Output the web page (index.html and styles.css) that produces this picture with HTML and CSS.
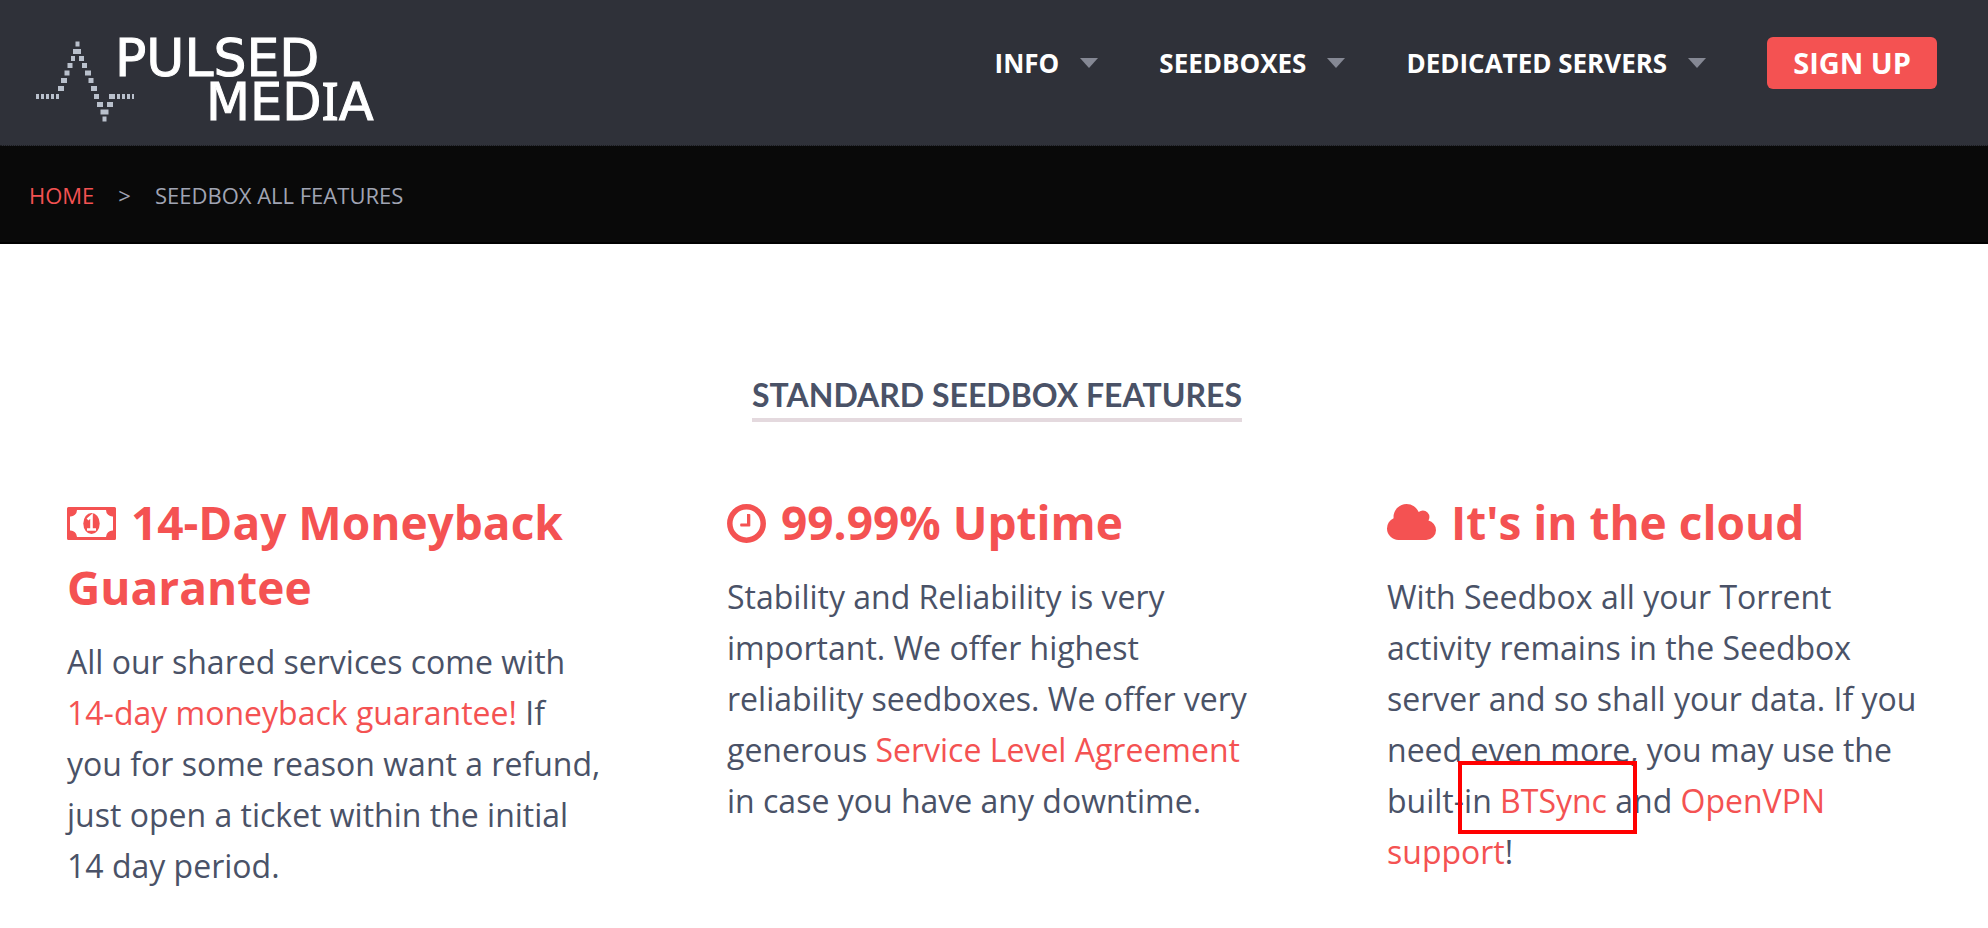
FILE: index.html
```html
<!DOCTYPE html>
<html lang="en">
<head>
<meta charset="utf-8">
<title>Seedbox All Features</title>
<link rel="stylesheet" href="styles.css">
</head>
<body>

<header class="site-header">
  <a class="logo" href="#">
    <svg width="350" height="116" viewBox="34 22 350 116" role="img" aria-label="Pulsed Media">
      <!-- heartbeat line -->
      <g fill="none" stroke="#b9c0cc" stroke-width="5">
        <path d="M36 96.5h25M112 96.5h22" stroke-dasharray="3 2"/>
        <path d="M75.500 44h4M73 51.500h8M71 58.500h4M79 58.500h5M67.500 65.500h5M82 65.500h5M64.500 73h5M85 73h6M61 80.500h6M88.500 80.500h5M58 88.500h6M91 88.500h6M94 96.500h5M109 96.500h4M97 104.500h6M107 104.500h6M100.500 112h8M102.500 119h4"/>
      </g>
      <text class="logo-text" x="115" y="76">PULSED</text>
      <text class="logo-text logo-second" x="206" y="120">MED<tspan class="logo-i">I</tspan>A</text>
    </svg>
  </a>
  <nav class="main-nav">
    <button class="nav-item" type="button">INFO <span class="arrow"></span></button>
    <button class="nav-item" type="button">SEEDBOXES <span class="arrow"></span></button>
    <button class="nav-item" type="button">DEDICATED SERVERS <span class="arrow"></span></button>
    <a class="signup" href="#">SIGN UP</a>
  </nav>
</header>

<div class="breadcrumb">
  <a href="#">HOME</a>
  <span>&gt;</span>
  <span>SEEDBOX ALL FEATURES</span>
</div>

<main class="features">
  <h2 class="section-title">STANDARD SEEDBOX FEATURES</h2>
  <div class="feature-grid">
    <div class="feature">
      <h3>
        <svg class="icon" width="49" height="33" viewBox="0 0 49 33">
          <path fill-rule="evenodd" d="M1.500 0h46a1.500 1.500 0 0 1 1.500 1.500v30a1.500 1.500 0 0 1-1.500 1.500h-46a1.500 1.500 0 0 1-1.500-1.500v-30a1.500 1.500 0 0 1 1.500-1.500zM10 3a6.500 6.500 0 0 1-7 6.500v14a6.500 6.500 0 0 1 7 6.500h29a6.500 6.500 0 0 1 7-6.500v-14a6.500 6.500 0 0 1-7-6.500z"/>
          <ellipse cx="24.500" cy="16.500" rx="8.200" ry="10.500"/>
          <path d="M20.500 12.500l4-3.500v13M20 22.500h9" fill="none" stroke="#fff" stroke-width="2.600"/>
        </svg>
        14-Day Moneyback Guarantee
      </h3>
      <p>All our shared services come with <a href="#">14-day moneyback guarantee!</a> If you for some reason want a refund, just open a ticket within the initial 14 day period.</p>
    </div>
    <div class="feature">
      <h3>
        <svg class="icon icon-clock" width="39" height="39" viewBox="0 0 39 39">
          <circle cx="19.500" cy="19.500" r="16.700" fill="none" stroke="#f45252" stroke-width="5.500"/>
          <path d="M20 10h2.500q.8 0 .8.800v11q0 .8-.8.800h-8.500q-.8 0-.8-.8v-1.600q0-.8.800-.8h6z"/>
        </svg>
        99.99% Uptime
      </h3>
      <p>Stability and Reliability is very important. We offer highest reliability seedboxes. We offer very generous <a href="#">Service Level Agreement</a> in case you have any downtime.</p>
    </div>
    <div class="feature">
      <h3>
        <svg class="icon" width="49" height="36" viewBox="64 128 1920 1408">
          <path d="M1984 1152q0 159-112.500 271.500T1600 1536H512q-185 0-316.500-131.500T64 1088q0-132 71-241.500T322 682q-2-28-2-43 0-212 150-362t362-150q158 0 286.500 88T1305 445q70-62 166-62 106 0 181 75t75 181q0 75-41 138 129 30 213.500 134.500T1984 1152z"/>
        </svg>
        It's in the cloud
      </h3>
      <p>With Seedbox all your Torrent activity remains in the Seedbox server and so shall your data. If you need even more, you may use the built-in <a class="marked" href="#">BTSync</a> and <a href="#">OpenVPN support</a>!</p>
    </div>
  </div>
</main>

</body>
</html>
```

FILE: styles.css
```css
* {
  box-sizing: border-box;
}
body {
  margin: 0;
  font-family: "Open Sans", sans-serif;
  background-color: #fff;
  color: #4a5267;
}
a {
  color: #f45252;
  text-decoration: none;
}

/* Header */
.site-header {
  display: flex;
  justify-content: space-between;
  align-items: flex-start;
  padding: 22px 51px 7px 34px;
  background-color: #2f3139;
  border-bottom: 1px dotted #1b1c20;
}
.logo svg {
  display: block;
}
.logo-text {
  font-family: "DejaVu Sans", sans-serif;
  font-size: 52px;
  fill: #fff;
  stroke: #fff;
  stroke-width: 1px;
}
.logo-second {
  font-size: 51px;
}
.logo-i {
  font-family: "Noto Sans", sans-serif;
}
.main-nav {
  display: flex;
  align-items: center;
  gap: 61px;
  padding-top: 15px;
}
.nav-item {
  display: flex;
  align-items: center;
  gap: 21px;
  padding: 0;
  border: none;
  background: none;
  color: #fff;
  font-family: inherit;
  font-size: 26px;
  font-weight: 700;
  cursor: pointer;
}
.arrow {
  border-left: 9px solid transparent;
  border-right: 9px solid transparent;
  border-top: 10px solid #858894;
}
.signup {
  padding: 0 26px;
  border-radius: 6px;
  background-color: #f45252;
  color: #fff;
  font-size: 29px;
  font-weight: 700;
  line-height: 52px;
}

/* Breadcrumb */
.breadcrumb {
  display: flex;
  gap: 24px;
  padding: 34px 29px 32px;
  background-color: #090909;
  border-bottom: 2px solid #000;
  color: #a0a4b3;
  font-size: 22px;
  line-height: 30px;
}

/* Features */
.features {
  padding: 127px 61px 32px 67px;
  text-align: center;
}
.section-title {
  display: inline-block;
  margin: 0 0 68px;
  border-bottom: 4px solid #e4d9de;
  font-family: Lato, sans-serif;
  font-size: 32px;
  font-weight: 700;
  line-height: 47px;
}
.feature-grid {
  display: grid;
  grid-template-columns: repeat(3, 1fr);
  gap: 120px;
  text-align: left;
}
.feature h3 {
  margin: 0 0 16px;
  color: #f45252;
  font-size: 46px;
  font-weight: 700;
  line-height: 65px;
}
.feature p {
  margin: 0;
  font-size: 32px;
  line-height: 51px;
}
.icon {
  margin-right: 3px;
  fill: #f45252;
}
.icon-clock {
  vertical-align: -3px;
}

/* Red frame around the BTSync link */
.marked {
  position: relative;
}
.marked::after {
  content: "";
  position: absolute;
  top: -18px;
  right: -30px;
  bottom: -12px;
  left: -42px;
  border: 4px solid #f00;
}
```
